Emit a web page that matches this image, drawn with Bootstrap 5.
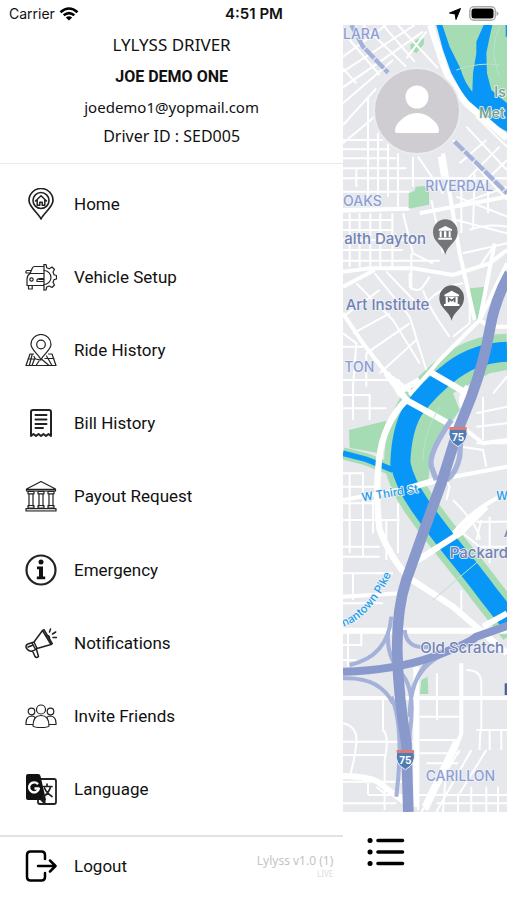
<!DOCTYPE html>
<html lang="en">
<head>
<meta charset="utf-8">
<meta name="viewport" content="width=device-width, initial-scale=1">
<title>Lylyss Driver</title>
<link href="https://cdn.jsdelivr.net/npm/bootstrap@5.3.0/dist/css/bootstrap.min.css" rel="stylesheet">
<style>
body{font-family:"Noto Sans",sans-serif;color:#111;background:#fff}
.status-bar{height:25px;font:400 14px/25px Inter,sans-serif;padding:1px 8px 0 9px;display:grid;grid-template-columns:1fr auto 1fr}
.status-time{font-weight:600;font-size:15px}
.drawer{width:67.7%}
.profile{height:139px;border-bottom:1px solid #e9e9e9;font-size:16px;line-height:20px;padding-top:9px}
.profile p{margin:0 0 9px}
.profile .app-title{font-size:17px;line-height:22px;margin-bottom:11px}
.profile .driver-name{font-family:Roboto,sans-serif;font-weight:700;font-size:16px;margin-bottom:10px}
.profile .driver-mail{font-size:15px}
.menu-list{padding:3px 0 9px}
.menu-link{color:#111;text-decoration:none;font-family:Roboto,sans-serif;font-size:17px;line-height:24px;padding-left:25px;gap:17px}
.glyph{width:32px;height:32px;flex:none;fill:none;stroke:#222;stroke-width:1.2;stroke-linecap:round;stroke-linejoin:round}
.drawer-foot{height:65px;border-top:2px solid #e2e2e2;padding-bottom:6px}
.version{font-size:12px;line-height:16px;color:#c4c4c4;padding-right:10px}
.version-env{font-size:8px;line-height:10px;color:#dedede}
.map-pane{min-height:0}
.map-svg{position:absolute;inset:0;width:100%;height:100%}
.avatar-btn{position:absolute;top:42px;left:30px;width:88px;height:88px;padding:0;border:2px solid #ecebf0;border-radius:50%;background:#cfcdd2}
.tool-bar{height:88px;padding:22px 0 0 21px}
.list-btn{border:0;background:none;padding:0;line-height:0}
</style>
<script src="https://cdn.jsdelivr.net/npm/bootstrap@5.3.0/dist/js/bootstrap.bundle.min.js"></script>
</head>
<body>
<div class="d-flex flex-column vh-100 overflow-hidden">
<header class="status-bar flex-shrink-0">
  <div class="d-flex align-items-center gap-1"><span>Carrier</span>
    <svg width="20" height="14" viewBox="0 0 20 14" fill="none" stroke="#000" stroke-width="2.6" aria-label="Wi-Fi"><path d="M1.500 5.200Q10-2.200 18.500 5.200M4.700 8.300Q10 3.800 15.300 8.300"/><path d="M10 13.500L6.800 10.500Q10 7.800 13.200 10.500Z" fill="#000" stroke="none"/></svg>
  </div>
  <span class="status-time">4:51 PM</span>
  <div class="d-flex align-items-center justify-content-end gap-2">
    <svg width="12" height="12" viewBox="0 0 12 12"><path d="M11.500.5L7 11.500 6.200 6 .5 5Z" stroke="#000" stroke-linejoin="round"/></svg>
    <svg width="30" height="15" viewBox="0 0 30 15"><rect x=".8" y=".8" width="25.500" height="13.400" rx="4" fill="#fff" stroke="#aaa" stroke-width="1.500"/><rect x="2.500" y="2.500" width="22" height="10" rx="2.500"/><path d="M27.500 5v5q2-1 2-2.500t-2-2.500" fill="#aaa"/></svg>
  </div>
</header>
<div class="d-flex flex-fill overflow-hidden">
<aside class="drawer d-flex flex-column flex-shrink-0">
  <div class="profile text-center flex-shrink-0">
    <p class="app-title">LYLYSS DRIVER</p>
    <p class="driver-name">JOE DEMO ONE</p>
    <p class="driver-mail">joedemo1@yopmail.com</p>
    <p>Driver ID : SED005</p>
  </div>
  <nav class="menu-list d-flex flex-column flex-fill" aria-label="Main">
    <a class="menu-link d-flex flex-fill align-items-center" href="#home"><svg class="glyph" viewBox="0 0 32 32"><path d="M16 31C14 26 4 19 4 12.500a12 12 0 0 1 24 0C28 19 18 26 16 31Z" stroke-width="1.700"/><circle cx="16" cy="12.500" r="8" stroke-width="1.600"/><path d="M10.500 13L16 7.800 21.500 13M12.200 12v5.200h2.600v-3h2.400v3h2.600V12" stroke-width="1.500"/></svg>Home</a>
    <a class="menu-link d-flex flex-fill align-items-center" href="#vehicle"><svg class="glyph" viewBox="0 0 32 32"><path d="M19 3.500V29M19 5.500H9.500Q8 5.500 7.400 7L5 12.500H19M5 12.500Q2 14.500 2 18v6.500H19M4.600 12L1 11.800Q.500 10 2 9.500h3.500M3.500 24.500v3.500h3.700v-3.500M12 20.500v-1.500q0-1.500 3-1.500h4M12 20.500h7M14 18.500h5"/><circle cx="6.500" cy="18.500" r="1.700"/><path d="M19 3.500h2l.7 3.200 2.600 1L27 6l2.500 2.500L28 11l1 2.700 2.500.8v3.500l-2.500.7-1 2.600 1.500 2.700-2.500 2.500-2.700-1.500-2.600 1L21 29h-2M19 9.500a7 7 0 0 1 0 14"/></svg>Vehicle Setup</a>
    <a class="menu-link d-flex flex-fill align-items-center" href="#rides"><svg class="glyph" viewBox="0 0 32 32"><path d="M16 26C14.500 21 6 16 6 10.500a10 10 0 0 1 20 0C26 16 17.500 21 16 26Z"/><circle cx="16" cy="10.500" r="4.300"/><path d="M8.500 20H5L1 31.500H31L27 20h-3.500M7.300 20l-3 11.500M3 25h6.500L7 31.500M9 22.500l1.500 2.500 5 1M17 25.500l7 6M21.500 22l5.500 9.500M20 24.500h9M14 27l-3 4.500"/></svg>Ride History</a>
    <a class="menu-link d-flex flex-fill align-items-center" href="#bills"><svg class="glyph" viewBox="0 0 32 32"><path stroke-width="2" d="M6 29V5q0-2 2-2h16q2 0 2 2v24l-2.500-2-2.500 2-2.500-2-2.500 2-2.500-2-2.500 2-2.500-2ZM10.500 8h11M10.500 12.500h11M10.500 17h11M10.500 21h7.500"/></svg>Bill History</a>
    <a class="menu-link d-flex flex-fill align-items-center" href="#payout"><svg class="glyph" viewBox="0 0 32 32"><path d="M1.500 9h29v2.500h-29ZM1 28.500h30v2.500H1Z" fill="#ccc" stroke="none"/><path d="M1.500 9L16 1.500 30.500 9v2h-29ZM2 9.300h28M3 11.500h6v2.300H3ZM13 11.500h6v2.300h-6ZM23 11.500h6v2.300h-6ZM4 14v12M8 14v12M14 14v12M18 14v12M24 14v12M28 14v12M3 25.500h6v2.500H3ZM13 25.500h6v2.500h-6ZM23 25.500h6v2.500h-6ZM1 28.500h30v2.500H1Z"/></svg>Payout Request</a>
    <a class="menu-link d-flex flex-fill align-items-center" href="#emergency"><svg class="glyph" viewBox="0 0 32 32"><circle cx="16" cy="16" r="14.500" stroke-width="2.200"/><circle cx="16" cy="8" r="2.500" fill="#111" stroke="none"/><path d="M12 12.500h6v10h2.200v2.700H11.800v-2.700H14v-7.300h-2Z" fill="#111" stroke="none"/></svg>Emergency</a>
    <a class="menu-link d-flex flex-fill align-items-center" href="#notifications"><svg class="glyph" viewBox="0 0 32 32"><path stroke-width="1.500" d="M9 15L17.500 3.500 26 17.500 12 21.500M17.500 3.500l1.500-.8 8.300 14-1.300.8M9 15l3 6.500-3 1.800Q4.500 25.500 2 22T3 17ZM7 16l3 5.500M3 20l4-1.500M7.500 24l2.500 5.500q1.500 2 3.500 0l-2-7M21.500 8.500q3.500-.5 3 4M24.500 5l1-3M27.500 7l3.200-2M28 10.500h3.500"/></svg>Notifications</a>
    <a class="menu-link d-flex flex-fill align-items-center" href="#invite"><svg class="glyph" viewBox="0 0 32 32"><circle cx="16" cy="9.500" r="4.500"/><path d="M8 26q0-10.500 8-10.500T24 26q-1 1.500-8 1.500T8 26Z"/><circle cx="6.500" cy="11.500" r="3.300"/><circle cx="25.500" cy="11.500" r="3.300"/><path d="M7.500 24.500H1Q.5 16.500 6.500 16q2.500 0 3.800 1.500M24.500 24.500H31q.5-8-5.500-8.500-2.500 0-3.800 1.500"/></svg>Invite Friends</a>
    <a class="menu-link d-flex flex-fill align-items-center" href="#language"><svg class="glyph" viewBox="0 0 32 32"><rect x="13" y="6" width="18" height="25" rx="2" stroke-width="1.800"/><path d="M3 1h10q2 0 2.500 2l5.500 24H3q-2 0-2-2V3q0-2 2-2Z" fill="#111" stroke="none"/><path d="M16 27l4 4v-4Z" fill="#111"/><path d="M13 11.200a5 5 0 1 0 1 4.300H9.500" stroke="#fff" stroke-width="2.300" stroke-linecap="butt"/><path d="M18 13.500h9M22 11v2.500M25.500 14q-1.500 6-7.500 10M19.500 15q2 5 7.500 8.500" stroke-width="1.700"/></svg>Language</a>
  </nav>
  <div class="drawer-foot d-flex align-items-center justify-content-between flex-shrink-0">
    <a class="menu-link d-flex align-items-center" href="#logout"><svg class="glyph" viewBox="0 0 32 32"><path stroke="#000" stroke-width="2.500" d="M20 9V5q0-3.500-3.500-3.500H5.500Q2 1.500 2 5v22q0 3.500 3.500 3.500h11Q20 30.500 20 27v-4M13 16h17M25 10.500l5.500 5.500-5.500 5.500"/></svg>Logout</a>
    <div class="version text-end">Lylyss v1.0 (1)<div class="version-env">LIVE</div></div>
  </div>
</aside>
<main class="d-flex flex-column flex-fill">
  <div class="map-pane position-relative flex-fill overflow-hidden">
    <svg class="map-svg" viewBox="0 75 492 2361" preserveAspectRatio="xMinYMin slice" role="img" aria-label="Map of Dayton">
      <rect y="75" width="492" height="2361" fill="#e6e8eb"/>
      <!-- parks -->
      <g fill="#a5dcb4">
        <path d="M285 75H492V350L440 330 385 280 335 200Z"/>
        <path d="M202 135L222 118 244 115 242 133 220 160 204 150Z"/>
        <path d="M197 580L215 572 218 560 245 558 258 570V614L197 626Z"/>
        <path d="M380 865L428 860 402 965 390 955Z"/>
        <path d="M18 1290L130 1262 110 1360 20 1344Z"/>
        <path d="M330 1180L440 1120 492 1110V1060L430 1040 200 1200V1400L255 1455 265 1350 350 1230Z"/>
        <path d="M235 2040L254 2030 256 2082H231Z"/>
      </g>
      <g fill="none" stroke="#a5dcb4">
        <path stroke-width="98" d="M492 1050Q400 1053 330 1105T210 1225Q175 1290 172 1390 185 1450 230 1515T340 1660 430 1775L520 1890"/>
        <path stroke-width="36" d="M0 1360L70 1378 150 1410Q165 1460 195 1510"/>
      </g>
      <!-- local streets -->
      <g fill="none" stroke="#fff" stroke-width="6">
        <path d="M0 170L130 75M0 215L215 75M0 262L240 95M0 310L150 180M0 375L100 265M0 430L95 350M60 75L190 200M120 75L215 185M165 75L285 205M20 120L110 225M250 95L190 175M40 250L0 205"/>
        <path d="M0 420H120M0 448H140M0 475H160M0 505H190M40 505V560M75 290V600M105 400V600M135 430V590M165 460V620M0 535H492M0 575H200M225 470L300 580M210 470V560"/>
        <path d="M330 420L492 600M370 380L492 510M400 350L492 440M430 420L350 490M470 440L370 540M492 480L400 570M330 620L492 560M355 540V700M395 520L390 690M340 590L492 650M435 540V640M340 660L492 700"/>
        <path d="M20 640V800M50 640V800M82 640V800M112 640V800M148 640V800M180 640L210 760M0 635L200 628M0 660H150M0 690H150M0 720H250M0 750H180M0 782H290M210 760L270 790M265 600L300 760M205 760V870M380 690Q430 670 492 680M360 760L492 730M410 800L450 740"/>
        <path d="M95 820L200 950 250 1110M130 815L240 930M40 850L150 960 230 1090M0 950L110 870M30 1000L140 940M70 1060L200 970M110 1120L220 1020M200 820V860Q225 880 240 860L260 830M240 870Q260 930 320 1010M250 910Q290 860 360 850M0 1000L40 1030 30 1160M0 1040H60M70 1060V1160M0 1140H170M0 1185H80V1260M30 1160V1260M0 1225H130M330 1010L380 970V900"/>
        <path d="M0 1420H60V1670M20 1420V1660M0 1460H100M0 1510H90M0 1560H170M0 1640H110M0 1670H110M90 1500V1600M130 1560V1680M165 1510V1660M0 1720H150M30 1720V1800M0 1810H120"/>
        <path d="M310 1440L320 1460 310 1500M355 1340L420 1350 430 1400M400 1240L492 1220M400 1280L492 1270M400 1330H492M450 1180L492 1130M420 1190V1320M360 1600L410 1640 492 1640M415 1560L400 1620M330 1500Q410 1580 410 1620M220 1670L300 1640M440 1550V1690M492 1565H400"/>
        <path d="M15 1890V2000M0 1935H55V1890M0 1980H40M120 2094V2190Q140 2210 125 2280V2430M225 2094V2430M282 2020V2160M230 2150H350M230 2220H350M0 2225H220M0 2265H130M370 2010Q415 2010 415 2050V2180Q410 2200 410 2250M0 2170Q45 2180 40 2230T20 2330M355 1770V1830M440 2190V2250M475 2190V2250M400 2190H492"/>
        <path d="M75 2385H492M75 2350V2385M0 2345H220M100 2360L130 2385M0 2410H160M230 2260H350M250 2290H345M350 2250L235 2436M385 2250L280 2436M430 2250L350 2380M310 2300L300 2436M345 2380V2436M385 2360V2436M430 2360V2436M465 2360V2436M280 2410H492"/>
      </g>
      <g fill="none" stroke="#fff" stroke-width="12">
        <path d="M0 815L80 805 210 805 330 825 440 790 492 750M0 860L95 810M0 940L60 1030 130 1120 210 1180M300 460L350 760 395 960M230 640L492 590M492 790L410 960 290 1080 200 1185M290 470L300 530M455 730L410 960 440 980 492 980M0 630L195 626"/>
        <path d="M0 1500L190 1465 280 1440 492 1400M0 1790L170 1780M370 1290L420 1330 492 1320M492 1480Q400 1520 340 1590T210 1690M355 1990V2200L340 2240 250 2430M0 2094H492"/>
      </g>
      <!-- rivers -->
      <g fill="none" stroke="#0897f6">
        <path stroke-width="60" d="M492 1055Q400 1058 330 1110T210 1230Q175 1290 172 1390 185 1450 230 1515T340 1660 430 1775L520 1890"/>
        <path stroke-width="17" d="M0 1360L70 1378 150 1410"/>
      </g>
      <path d="M280 75H298L320 140 352 205Q365 250 388 275L390 220 400 160V125L422 75H448L440 110 430 160 432 220 445 270 492 310V395L440 365 375 310 325 220 300 150Z" fill="#0897f6"/>
      <path d="M488 75h4v35h-4Z" fill="#0897f6"/>
      <!-- main roads -->
      <g fill="none" stroke="#fff">
        <path stroke-width="20" d="M262 75L300 190Q315 240 370 310L492 415"/>
        <path stroke-width="19" d="M130 1120L190 1200 370 1300M260 1115L380 1185M190 1200Q120 1270 108 1380T110 1590Q145 1680 200 1735L330 1820 492 1960M160 1180L230 1140"/>
        <path stroke-width="18" d="M0 1892H492M420 1880L492 1840M340 2225L245 2420M0 2328Q90 2330 110 2350L190 2410M220 2000V2420M210 1690L350 1600 430 1520M375 1160Q345 1200 365 1225L340 1270M195 1465L280 1440"/>
        <path stroke-width="3" stroke="#b9e3cc" d="M340 210Q410 185 470 195M470 80Q435 150 470 230M240 1380Q240 1300 290 1220M270 1800L410 1680"/>
      </g>
      <!-- highways -->
      <g fill="none" stroke="#a4b1d9" stroke-width="12">
        <path d="M325 1260Q255 1360 265 1400L280 1440M355 1290L350 1370Q340 1420 310 1440" stroke-width="16"/>
        <path d="M145 1850Q135 1970 20 1995M185 1890Q190 1950 260 1940M0 2035Q110 2030 150 2110M260 1980Q200 2040 200 2150M135 1900Q130 1970 175 2020T200 2200V2370M145 2090Q185 2180 160 2390M310 1960Q230 1990 205 2080"/>
      </g>
      <g fill="none" stroke="#8999cc">
        <path stroke-width="32" d="M500 820Q455 900 440 990T385 1190L345 1290 295 1450 240 1600 190 1740Q160 1830 163 1960T190 2230L196 2436"/>
        <path stroke-width="24" d="M0 2015Q160 2010 270 1970T400 1910L500 1875"/>
        <path stroke-width="13" stroke="#a4b1d9" stroke-dasharray="38 4" d="M25 75L60 140 135 218M335 425L450 538 492 580"/>
      </g>
      <!-- place labels -->
      <g font-family="Inter,sans-serif" font-weight="500" font-size="42" fill="#8d9ed6" stroke="#f1f3f6" stroke-width="5" paint-order="stroke" stroke-linejoin="round">
        <text x="0" y="116">LARA</text><text x="247" y="573">RIVERDAL</text><text x="0" y="619">OAKS</text><text x="4" y="1115">TON</text><text x="248" y="2344">CARILLON</text>
        <g fill="#7181b5" font-size="45"><text x="4" y="732">alth Dayton</text><text x="8" y="930">Art Institute</text><text x="320" y="1673">Packard</text><text x="232" y="1960">Old Scratch</text><text x="482" y="1610">A</text></g>
        <g fill="#6fa08c" font-size="42"><text x="454" y="292">Is</text><text x="408" y="354">Met</text></g>
        <g fill="#1c9bea" font-size="34"><text transform="translate(58 1504) rotate(-9)">W Third St</text><text x="460" y="1500">W</text>
          <path id="pike" d="M2 1880Q85 1848 142 1728" fill="none" stroke="none"/><text><textPath href="#pike">nantown Pike</textPath></text></g>
      </g>
      <path d="M485 2050h7v35h-7Z" fill="#51619a"/>
      <!-- museum pins -->
      <path d="M307 765C302 735 270 728 270 695a37 37 0 0 1 74 0C344 728 312 735 307 765Z" fill="#747579"/><path d="M307 678l20 10v4h-40v-4ZM290 694h6v18h-6ZM303 694h7v18h-7ZM317 694h6v18h-6ZM286 713h41v6h-41Z" fill="#fff"/>
      <path d="M326 963C321 933 289 926 289 893a37 37 0 0 1 74 0C363 926 331 933 326 963Z" fill="#626367"/><path d="M326 872l22 12v5h-44v-5ZM308 890h36v22h-36ZM303 912h46v6h-46Z" fill="#fff"/><path d="M317 907v-12l9 7 9-7v12" fill="none" stroke="#626367" stroke-width="5"/>
      <!-- interstate shields -->
      <g font-family="Inter,sans-serif" font-weight="700" font-size="30" text-anchor="middle" stroke-linejoin="round">
        <path d="M319 1286h52q8 36-26 54-34-18-26-54Z" fill="#507cb5" stroke="#eef1f7" stroke-width="3"/><path d="M319 1281h52v9h-52Z" fill="#df7973"/><text x="345" y="1324" fill="#fff">75</text>
        <path d="M161 2255h52q8 36-26 54-34-18-26-54Z" fill="#507cb5" stroke="#eef1f7" stroke-width="3"/><path d="M161 2250h52v9h-52Z" fill="#df7973"/><text x="187" y="2293" fill="#fff">75</text>
      </g>
    </svg>
    <button class="avatar-btn" type="button" aria-label="Profile"><svg width="84" height="84" viewBox="0 0 84 84" fill="#fff"><circle cx="42" cy="28" r="11.500"/><path d="M20 62Q20 56 26 51 33 44 42 44t16 7q6 5 6 11 0 2-2 2H22q-2 0-2-2Z"/></svg></button>
  </div>
  <div class="tool-bar flex-shrink-0">
    <button class="list-btn" type="button" aria-label="Open list"><svg width="44" height="36" viewBox="0 0 44 36" fill="none" stroke="#000" stroke-width="3.600" stroke-linecap="round"><path d="M14 6.500h24.500M14 18h24.500M14 29.500h24.500"/><path d="M6 6.500h.1M6 18h.1M6 29.500h.1" stroke-width="5"/></svg></button>
  </div>
</main>
</div>
</div>
</body>
</html>
